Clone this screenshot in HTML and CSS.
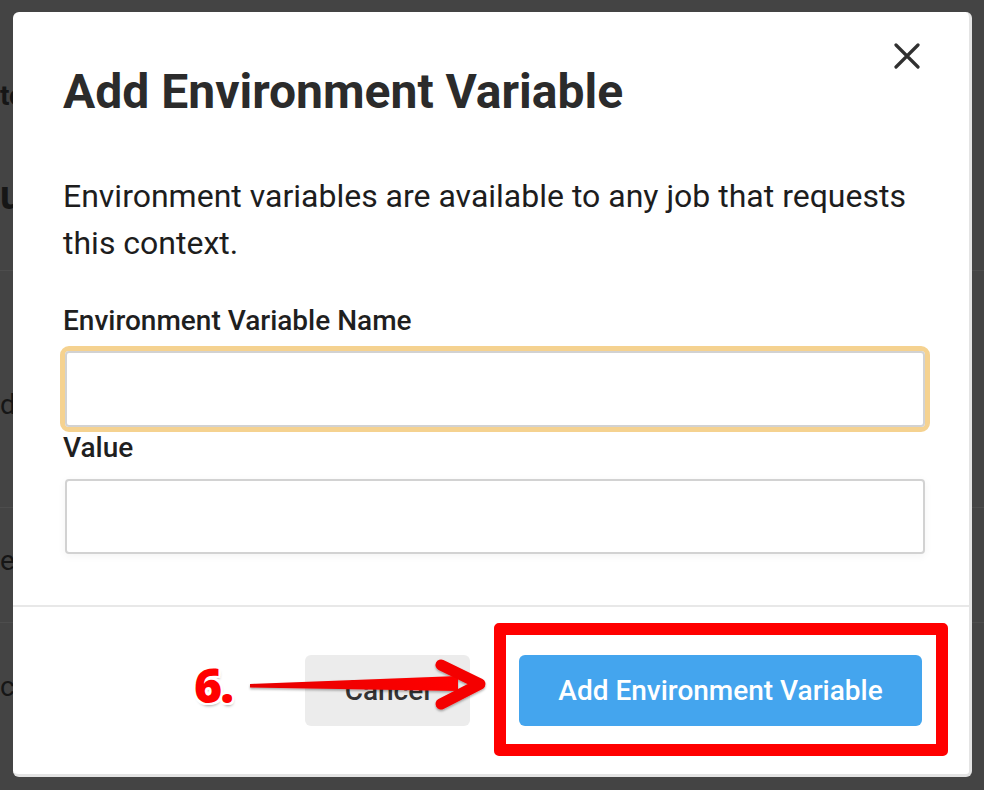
FILE: index.html
```html
<!DOCTYPE html>
<html lang="en">
<head>
<meta charset="utf-8">
<title>Add Environment Variable</title>
<link rel="stylesheet" href="styles.css">
</head>
<body>
<div class="page" aria-hidden="true">
  <div class="bg-row bg-r1"><span class="bg-text">to</span></div>
  <div class="bg-row bg-r2"><span class="bg-text">u</span></div>
  <div class="bg-row bg-r3 lined"><span class="bg-text">d</span></div>
  <div class="bg-row bg-r4 lined"><span class="bg-text">e</span></div>
  <div class="bg-row bg-r5 lined"><span class="bg-text">c</span></div>
</div>

<div class="modal">
  <div class="modal-body">
    <div class="modal-head">
      <h1 class="title">Add Environment Variable</h1>
      <button class="close" aria-label="Close">
        <svg width="26" height="26" viewBox="0 0 26 26"><path d="M2 2 L24 24 M24 2 L2 24" stroke="#303030" stroke-width="3.2" stroke-linecap="round" fill="none"/></svg>
      </button>
    </div>
    <p class="desc">Environment variables are available to any job that requests this context.</p>
    <label class="label label-first">Environment Variable Name</label>
    <div class="focus-ring"><div class="input"></div></div>
    <label class="label label-second">Value</label>
    <div class="input input-plain"></div>
  </div>
  <div class="modal-foot">
    <button class="btn btn-cancel">Cancel</button>
    <button class="btn btn-primary">Add Environment Variable</button>
  </div>
</div>

<div class="highlight"></div>
<div class="step">6.</div>
<svg class="arrow" width="984" height="790" viewBox="0 0 984 790">
  <defs>
    <linearGradient id="ag" x1="0" x2="1" y1="0" y2="0">
      <stop offset="0" stop-color="#e60000"/>
      <stop offset="1" stop-color="#ff0000"/>
    </linearGradient>
    <filter id="sh" x="-10%" y="-50%" width="120%" height="200%">
      <feDropShadow dx="0" dy="1.5" stdDeviation="1.2" flood-color="#000" flood-opacity="0.35"/>
    </filter>
  </defs>
  <g filter="url(#sh)">
    <polygon points="250,684 250,687.5 458,691 458,676" fill="url(#ag)"/>
    <path d="M441 665 L480 684 L441 704" stroke="#f40000" stroke-width="11" stroke-linecap="round" stroke-linejoin="round" fill="none"/>
  </g>
</svg>
</body>
</html>
```

FILE: styles.css
```css
* { box-sizing: border-box; }

html, body {
  margin: 0;
  padding: 0;
}

body {
  width: 984px;
  height: 790px;
  overflow: hidden;
  background: #444444;
  font-family: Roboto, "Liberation Sans", Arial, sans-serif;
  position: relative;
}

/* background page under overlay */
.page {
  display: flex;
  flex-direction: column;
  height: 790px;
}
.bg-row {
  display: flex;
  align-items: center;
  overflow: hidden;
}
.bg-row.lined { border-top: 1px solid #4d4d4d; }
.bg-r1 { height: 150px; }
.bg-r2 { height: 120px; }
.bg-r3 { height: 237px; }
.bg-r4 { height: 115px; }
.bg-r5 { height: 168px; }
.bg-text {
  color: #161616;
  font-size: 28px;
  white-space: nowrap;
}
.bg-r1 .bg-text { font-weight: 700; margin-top: 40px; }
.bg-r2 .bg-text { font-size: 40px; font-weight: 700; margin-top: -30px; }
.bg-r3 .bg-text { margin-top: 30px; }
.bg-r4 .bg-text { margin-top: -10px; }
.bg-r5 .bg-text { margin-top: -40px; }

/* modal */
.modal {
  position: absolute;
  left: 13px;
  top: 12px;
  width: 959px;
  height: 765px;
  background: #ffffff;
  border-radius: 6px;
  border-right: 3px solid #e4e4e4;
  border-bottom: 3px solid #e4e4e4;
  display: flex;
  flex-direction: column;
}

.modal-body {
  padding: 0 47px 0 50px;
  height: 593px;
  display: flex;
  flex-direction: column;
}

.modal-head {
  display: flex;
  justify-content: space-between;
  align-items: flex-start;
  padding-top: 52px;
}

.title {
  margin: 0;
  font-size: 48px;
  line-height: 56px;
  font-weight: 700;
  color: #2b2b2b;
}

.close {
  border: 0;
  background: none;
  padding: 0;
  margin: -21px 2px 0 0;
  width: 26px;
  height: 26px;
  display: flex;
}

.desc {
  margin: 53px 0 0 0;
  font-size: 32px;
  line-height: 47px;
  color: #1d1d1d;
  max-width: 860px;
}

.label {
  display: block;
  font-size: 28px;
  line-height: 32px;
  font-weight: 500;
  color: #1f1f1f;
}
.label-first { margin-top: 38px; }
.label-second { margin-top: 0; }

.focus-ring {
  margin: 9px 0 0 -3px;
  width: 870px;
  border: 5px solid #f5d290;
  border-radius: 9px;
}

.input {
  height: 76px;
  border: 2px solid #d2d2d2;
  border-radius: 4px;
  background: #fff;
}

.input-plain {
  margin: 15px 0 0 2px;
  width: 860px;
  height: 75px;
  box-shadow: 0 2px 8px rgba(0,0,0,0.05);
}

.modal-foot {
  border-top: 2px solid #e8e8e8;
  flex: 1;
  display: flex;
  justify-content: flex-end;
  align-items: flex-start;
  gap: 49px;
  padding: 48px 47px 0 0;
}

.btn {
  border: 0;
  height: 71px;
  border-radius: 6px;
  font-family: Roboto, "Liberation Sans", Arial, sans-serif;
  font-size: 28px;
  font-weight: 500;
}
.btn-cancel {
  width: 165px;
  background: #ececec;
  color: #333333;
}
.btn-primary {
  width: 403px;
  background: #44a5ee;
  color: #ffffff;
}

/* annotations */
.highlight {
  position: absolute;
  left: 494px;
  top: 623px;
  width: 454px;
  height: 133px;
  border: 12px solid #ff0000;
  border-radius: 5px;
}

.step {
  position: absolute;
  left: 194px;
  top: 655px;
  font-family: "Open Sans", Roboto, sans-serif;
  font-weight: 800;
  font-size: 48px;
  line-height: 60px;
  letter-spacing: -2px;
  color: #ff0000;
  text-shadow:
    2px 0 0 #fff, -2px 0 0 #fff, 0 2px 0 #fff, 0 -2px 0 #fff,
    2px 2px 0 #fff, -2px 2px 0 #fff, 2px -2px 0 #fff, -2px -2px 0 #fff,
    1px 3px 3px rgba(0,0,0,0.35);
}

.arrow {
  position: absolute;
  left: 0;
  top: 0;
  pointer-events: none;
}
```
